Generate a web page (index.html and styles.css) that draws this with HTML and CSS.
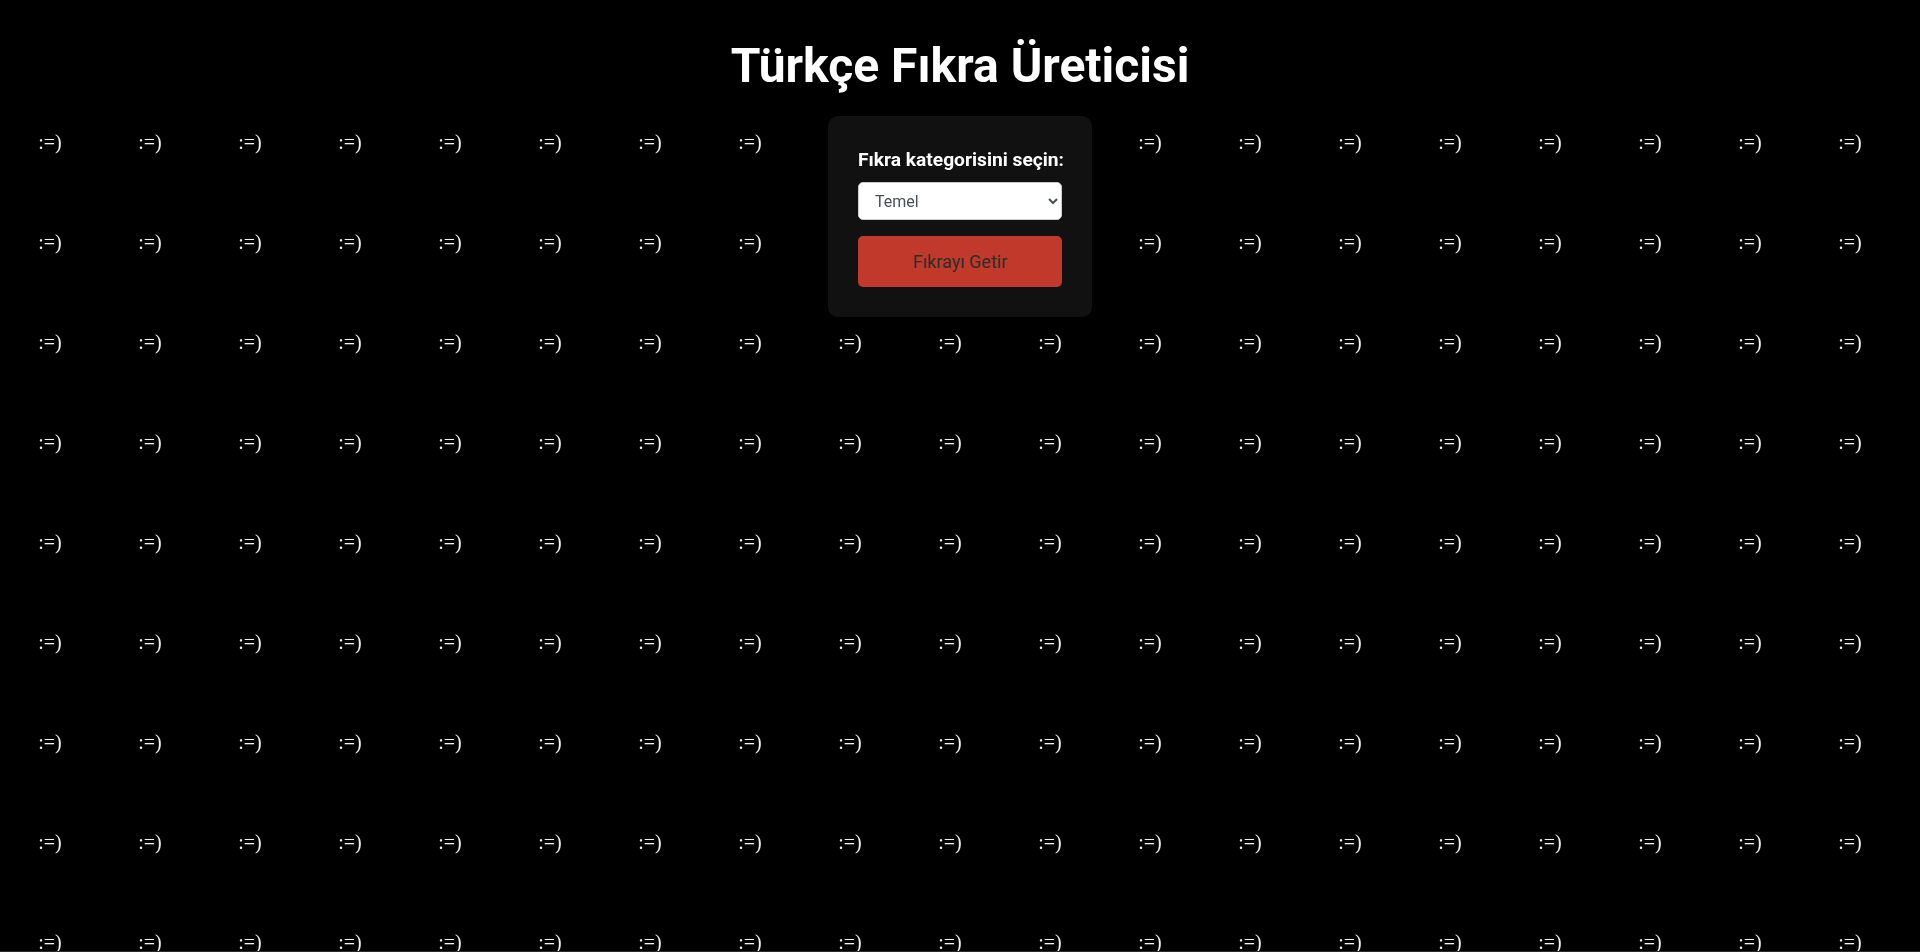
FILE: index.html
```html
<!DOCTYPE html>
<html lang="tr">
<head>
<meta charset="utf-8">
<title>Türkçe Fıkra Üreticisi</title>
<link rel="stylesheet" href="styles.css">
</head>
<body>
<div class="smileys" id="smileys"></div>
<main class="main">
  <h1 class="title">Türkçe Fıkra Üreticisi</h1>
  <div class="card">
    <label class="label" for="kategori">Fıkra kategorisini seçin:</label>
    <select class="select" id="kategori">
      <option>Temel</option>
      <option>Nasreddin Hoca</option>
      <option>Bektaşi</option>
    </select>
    <button class="btn" type="button">Fıkrayı Getir</button>
  </div>
</main>
<div class="bottom-line"></div>
<script src="script.js"></script>
</body>
</html>
```
FILE: script.js
```js
(function () {
  var box = document.getElementById('smileys');
  var html = '';
  for (var i = 0; i < 19 * 10; i++) {
    html += '<span class="smiley">:=)</span>';
  }
  box.innerHTML = html;
})();
```
FILE: styles.css
```css
html, body {
  margin: 0;
  padding: 0;
  background: #000;
  height: 100%;
  overflow: hidden;
}
body {
  font-family: Roboto, "Liberation Sans", sans-serif;
  color: #fff;
}
.smileys {
  position: fixed;
  inset: 0;
  z-index: 0;
  display: grid;
  grid-template-columns: repeat(19, 100px);
  grid-auto-rows: 100px;
  padding-top: 92px;
  overflow: hidden;
}
.smiley {
  display: flex;
  align-items: center;
  justify-content: center;
  font-family: "Liberation Serif", "Times New Roman", serif;
  font-size: 20px;
  color: #f2f2f2;
}
.main {
  position: relative;
  z-index: 1;
  display: flex;
  flex-direction: column;
  align-items: center;
}
.title {
  margin: 38px 0 22px;
  font-size: 48px;
  line-height: 56px;
  font-weight: 700;
  color: #fff;
}
.card {
  width: 204px;
  padding: 30px;
  background: #111;
  border-radius: 10px;
  display: flex;
  flex-direction: column;
}
.label {
  font-size: 19.2px;
  font-weight: 700;
  line-height: 22px;
  margin: 3px 0 11px;
  text-align: center;
  white-space: nowrap;
}
.select {
  height: 38px;
  width: 100%;
  padding: 0 12px;
  border: 1px solid #ccc;
  border-radius: 5px;
  background: #fff;
  color: #495057;
  font-family: Roboto, "Liberation Sans", sans-serif;
  font-size: 16px;
  margin-bottom: 16px;
}
.btn {
  height: 51px;
  width: 100%;
  border: none;
  border-radius: 5px;
  background: #c0392b;
  color: #2e2e2e;
  font-family: Roboto, "Liberation Sans", sans-serif;
  font-size: 18px;
  cursor: pointer;
}
.bottom-line {
  position: fixed;
  left: 0;
  right: 0;
  bottom: 0;
  height: 1px;
  background: #2a2a2a;
  z-index: 2;
}
```
